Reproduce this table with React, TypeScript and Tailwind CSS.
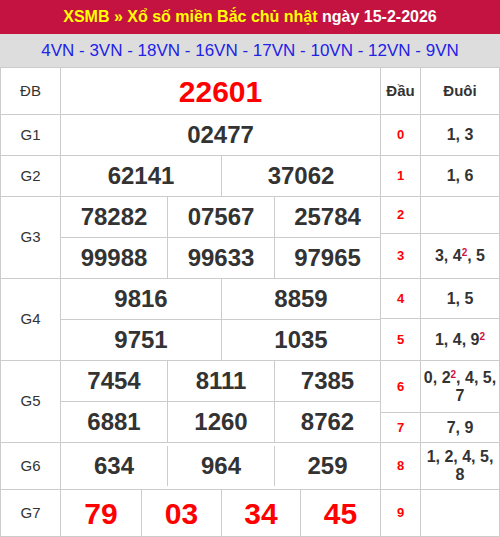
import React from "react";

const B = "border-[#cccccc]";

function Num({ children, className = "" }: { children: React.ReactNode; className?: string }) {
  return (
    <div className={`flex items-center justify-center text-[24px] font-bold text-[#333333] ${className}`}>{children}</div>
  );
}

function Sup({ children }: { children: React.ReactNode }) {
  return <sup className="text-[10px] text-[#d01040] font-bold">{children}</sup>;
}

function Label({ children, h }: { children: React.ReactNode; h: string }) {
  return (
    <div className={`w-[60px] ${h} border-r border-b ${B} flex items-center justify-center text-[15px] text-[#333333]`}>
      {children}
    </div>
  );
}

export default function App() {
  const right: { d: string; t: React.ReactNode; h: string }[] = [
    { d: "0", t: "1, 3", h: "h-[41px]" },
    { d: "1", t: "1, 6", h: "h-[41px]" },
    { d: "2", t: "", h: "h-[37px]" },
    { d: "3", t: <>3, 4<Sup>2</Sup>, 5</>, h: "h-[45px]" },
    { d: "4", t: "1, 5", h: "h-[40px]" },
    { d: "5", t: <>1, 4, 9<Sup>2</Sup></>, h: "h-[42px]" },
    { d: "6", t: <>0, 2<Sup>2</Sup>, 4, 5, 7</>, h: "h-[52px]" },
    { d: "7", t: "7, 9", h: "h-[30px]" },
    { d: "8", t: "1, 2, 4, 5, 8", h: "h-[47px]" },
    { d: "9", t: "", h: "h-[47px]" },
  ];

  return (
    <div className="w-[500px] bg-white font-['Liberation_Sans',Arial,sans-serif]">
      <div className="h-[34px] bg-[#c41340] flex items-center justify-center text-[16px] font-bold">
        <span className="text-[#ffff00]">XSMB » Xổ số miền Bắc chủ nhật</span>
        <span className="text-white">&nbsp;ngày 15-2-2026</span>
      </div>
      <div className="h-[33px] bg-[#dddddd] flex items-center justify-center text-[17px] text-[#2222e6]">
        4VN - 3VN - 18VN - 16VN - 17VN - 10VN - 12VN - 9VN
      </div>
      <div className={`flex border-t ${B}`}>
        {/* left table */}
        <div className={`w-[381px] border-l ${B} flex flex-col`}>
          <div className="flex">
            <Label h="h-[47px]">ĐB</Label>
            <div className={`flex-1 h-[47px] border-r border-b ${B} flex items-center justify-center text-[30px] font-bold text-[#ff0000]`}>
              22601
            </div>
          </div>
          <div className="flex">
            <Label h="h-[41px]">G1</Label>
            <Num className={`flex-1 h-[41px] border-r border-b ${B}`}>02477</Num>
          </div>
          <div className="flex">
            <Label h="h-[41px]">G2</Label>
            <Num className={`w-[161px] h-[41px] border-r border-b ${B}`}>62141</Num>
            <Num className={`flex-1 h-[41px] border-r border-b ${B}`}>37062</Num>
          </div>
          <div className="flex">
            <Label h="h-[82px]">G3</Label>
            <div className="flex-1 flex flex-col">
              {[["78282", "07567", "25784"], ["99988", "99633", "97965"]].map((r, i) => (
                <div key={i} className="flex">
                  <Num className={`w-[107px] h-[41px] border-r border-b ${B}`}>{r[0]}</Num>
                  <Num className={`w-[107px] h-[41px] border-r border-b ${B}`}>{r[1]}</Num>
                  <Num className={`flex-1 h-[41px] border-r border-b ${B}`}>{r[2]}</Num>
                </div>
              ))}
            </div>
          </div>
          <div className="flex">
            <Label h="h-[82px]">G4</Label>
            <div className="flex-1 flex flex-col">
              {[["9816", "8859"], ["9751", "1035"]].map((r, i) => (
                <div key={i} className="flex">
                  <Num className={`w-[161px] h-[41px] border-r border-b ${B}`}>{r[0]}</Num>
                  <Num className={`flex-1 h-[41px] border-r border-b ${B}`}>{r[1]}</Num>
                </div>
              ))}
            </div>
          </div>
          <div className="flex">
            <Label h="h-[82px]">G5</Label>
            <div className="flex-1 flex flex-col">
              {[["7454", "8111", "7385"], ["6881", "1260", "8762"]].map((r, i) => (
                <div key={i} className="flex">
                  <Num className={`w-[107px] h-[41px] border-r border-b ${B}`}>{r[0]}</Num>
                  <Num className={`w-[107px] h-[41px] border-r border-b ${B}`}>{r[1]}</Num>
                  <Num className={`flex-1 h-[41px] border-r border-b ${B}`}>{r[2]}</Num>
                </div>
              ))}
            </div>
          </div>
          <div className="flex">
            <Label h="h-[47px]">G6</Label>
            <div className={`flex-1 h-[47px] border-r border-b ${B} flex py-[3px]`}>
              <Num className={`w-[107px] border-r ${B}`}>634</Num>
              <Num className={`w-[107px] border-r ${B}`}>964</Num>
              <Num className="flex-1">259</Num>
            </div>
          </div>
          <div className="flex">
            <Label h="h-[47px]">G7</Label>
            {["79", "03", "34"].map((n, i) => (
              <div
                key={n}
                className={`${i === 0 ? "w-[81px]" : i === 1 ? "w-[80px]" : "w-[79px]"} h-[47px] border-r border-b ${B} flex items-center justify-center text-[30px] font-bold text-[#ff0000]`}
              >
                {n}
              </div>
            ))}
            <div className={`flex-1 h-[47px] border-r border-b ${B} flex items-center justify-center text-[30px] font-bold text-[#ff0000]`}>
              45
            </div>
          </div>
        </div>
        {/* right table */}
        <div className="w-[119px] flex flex-col">
          <div className="flex">
            <div className={`w-[40px] h-[47px] border-r border-b ${B} flex items-center justify-center text-[15px] font-bold text-[#333333]`}>Đầu</div>
            <div className={`flex-1 h-[47px] border-r border-b ${B} flex items-center justify-center text-[15px] font-bold text-[#333333]`}>Đuôi</div>
          </div>
          {right.map((r) => (
            <div key={r.d} className="flex">
              <div className={`w-[40px] ${r.h} border-r border-b ${B} flex items-center justify-center text-[13px] font-bold text-[#ff0000]`}>
                {r.d}
              </div>
              <div className={`flex-1 ${r.h} border-r border-b ${B} flex items-center justify-center text-center text-[16px] leading-[18px] font-bold text-[#333333] px-[2px]`}>
                <span>{r.t}</span>
              </div>
            </div>
          ))}
        </div>
      </div>
    </div>
  );
}
